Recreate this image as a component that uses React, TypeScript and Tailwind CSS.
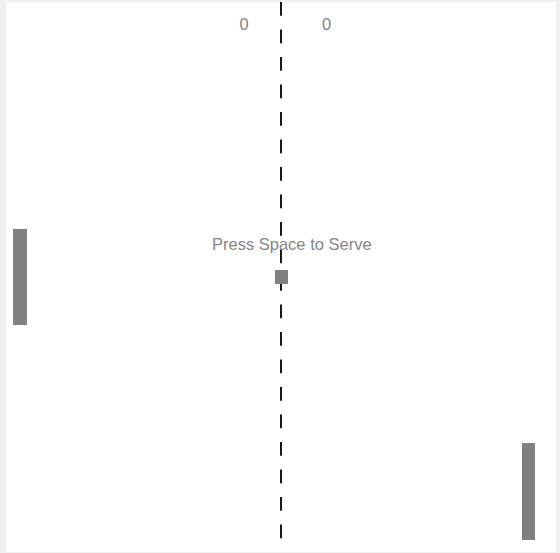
import React from "react";

export default function App() {
  return (
    <div className="w-[560px] h-[553px] bg-[#f0f0f0] pt-[2px] pl-[6px]" style={{ fontFamily: '"Liberation Sans", Arial, sans-serif' }}>
      <div className="relative w-[550px] h-[550px] bg-white overflow-hidden">
        <svg className="absolute left-[274px] top-0" width="2" height="550" viewBox="0 0 2 550">
          <line x1="1" y1="0" x2="1" y2="550" stroke="#000" strokeWidth="1.8" strokeDasharray="13.75 13.75" />
        </svg>
        <div className="absolute left-[233.5px] top-[14px] text-[16.5px] leading-none text-[#858585]">0</div>
        <div className="absolute left-[316px] top-[14px] text-[16.5px] leading-none text-[#858585]">0</div>
        <div className="absolute left-[206px] top-[234px] text-[16.5px] leading-none text-[#858585] whitespace-nowrap">Press Space to Serve</div>
        <div className="absolute left-[7px] top-[227px] w-[13.75px] h-[96.25px] bg-[#808080]" />
        <div className="absolute left-[515.7px] top-[441.3px] w-[13.75px] h-[96.25px] bg-[#808080]" />
        <div className="absolute left-[268.5px] top-[268px] w-[13.75px] h-[13.75px] bg-[#808080]" />
      </div>
    </div>
  );
}
